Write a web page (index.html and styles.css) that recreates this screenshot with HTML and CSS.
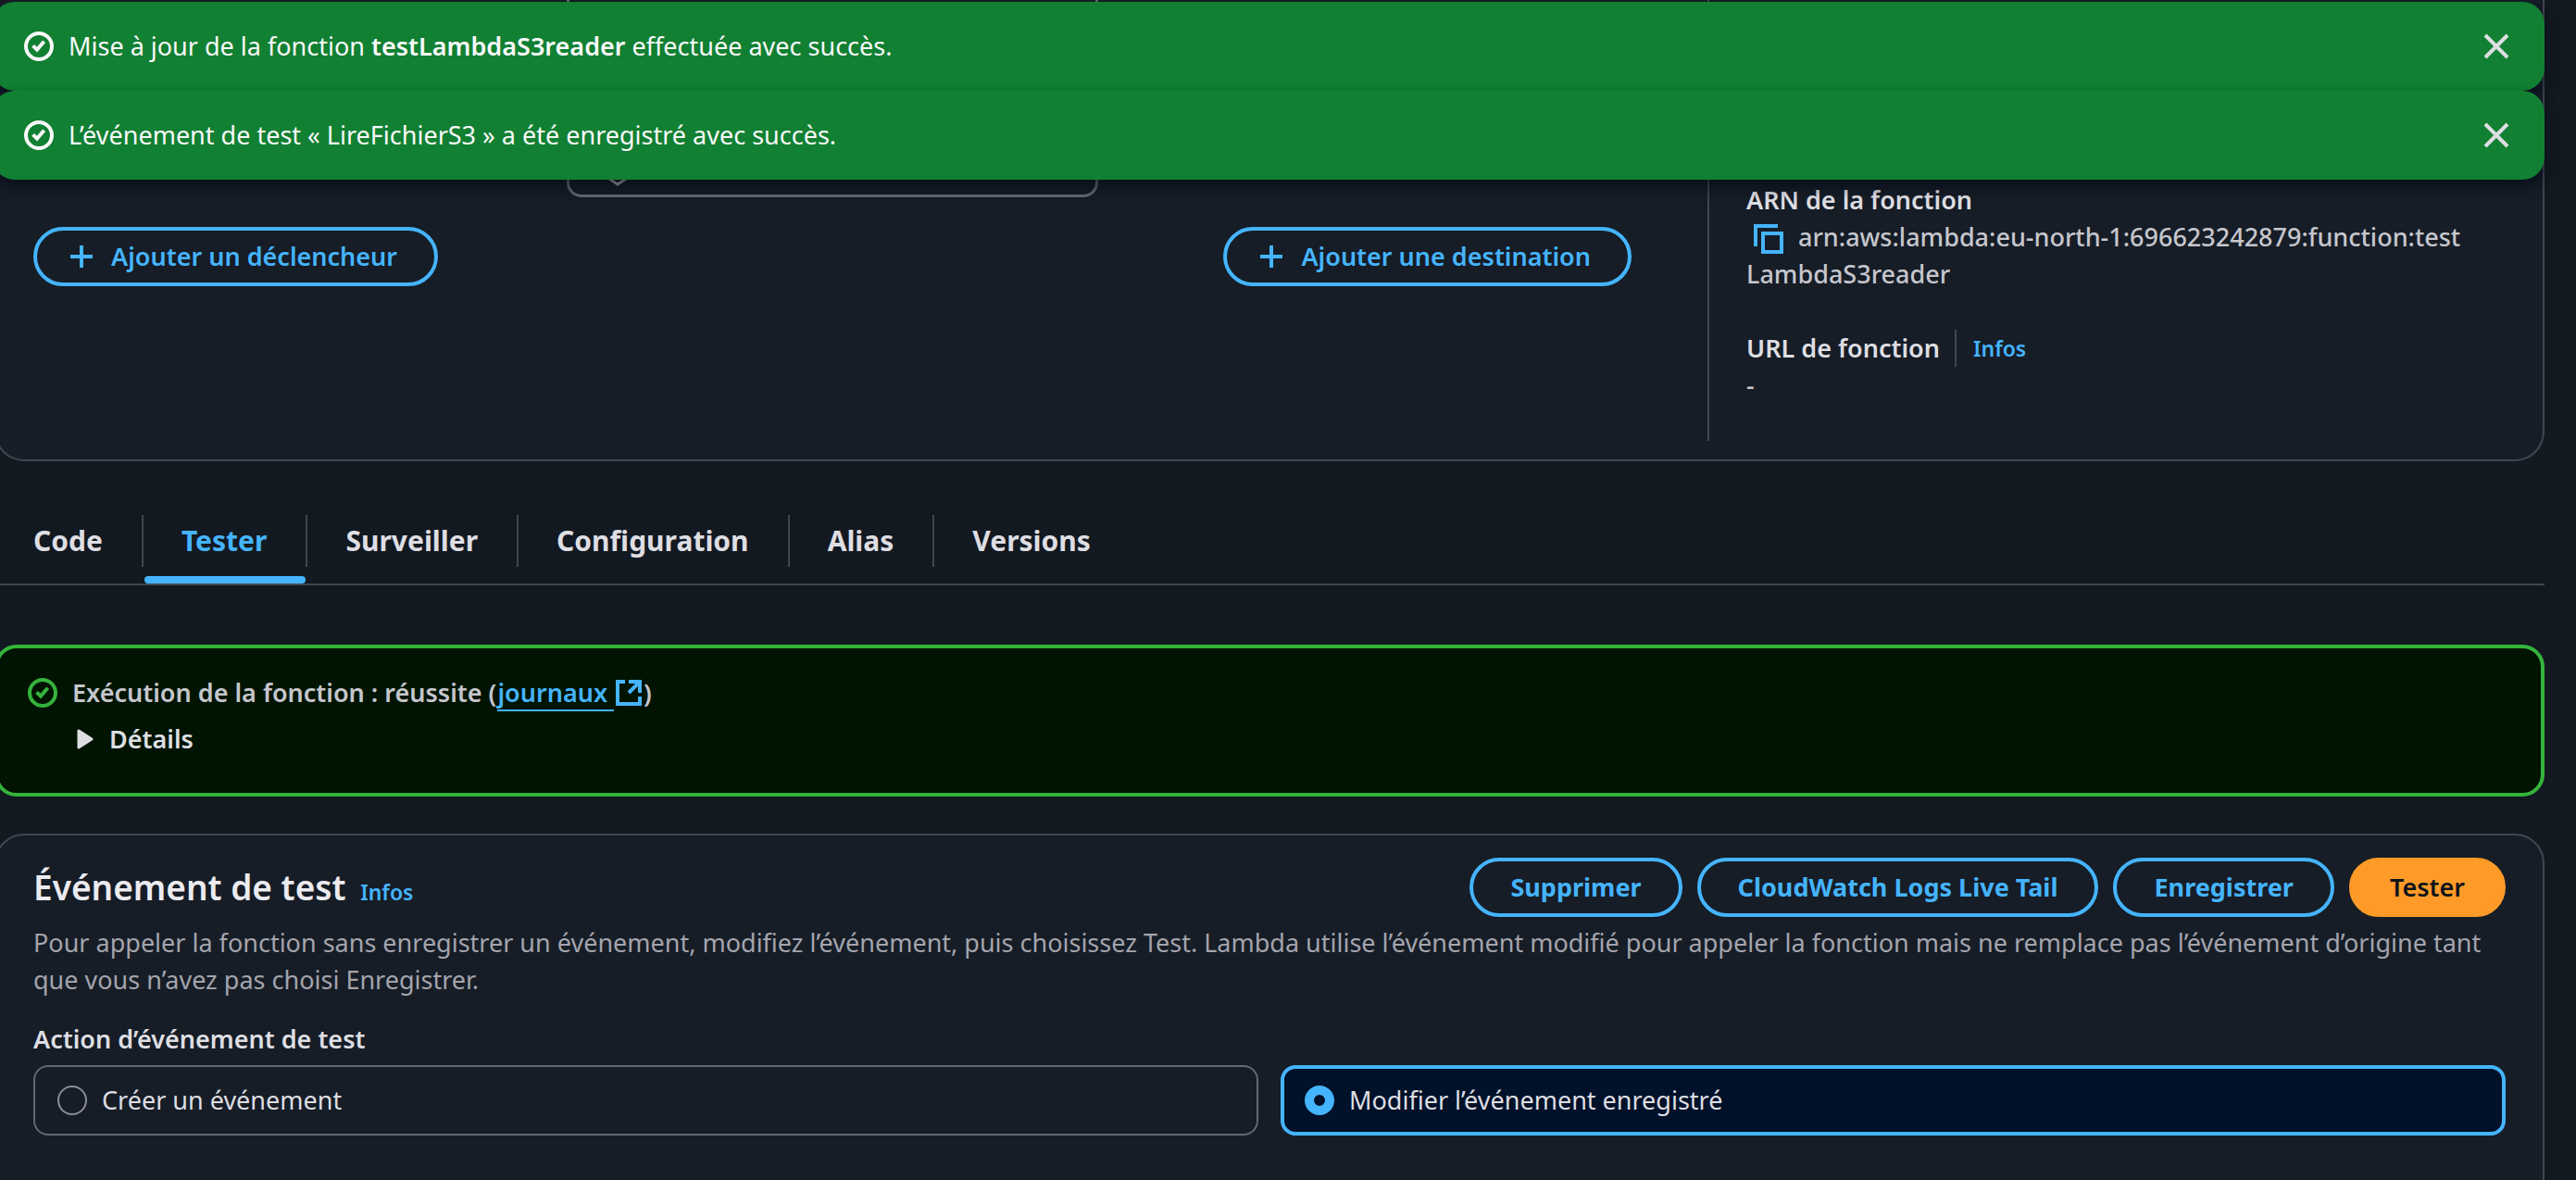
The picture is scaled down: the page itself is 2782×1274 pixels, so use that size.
FILE: index.html
```html
<!DOCTYPE html>
<html lang="fr">
<head>
<meta charset="utf-8">
<title>testLambdaS3reader</title>
<link rel="stylesheet" href="styles.css">
</head>
<body>
<div class="flashbar">
  <div class="flash" role="status">
    <svg class="status-icon" viewBox="0 0 16 16"><circle cx="8" cy="8" r="7"/><path d="m4.800 7.700 2.200 2.100 3.800-4.400"/></svg>
    <p class="flash-text">Mise à jour de la fonction <strong>testLambdaS3reader</strong> effectuée avec succès.</p>
    <button class="close" aria-label="Fermer"><svg viewBox="0 0 16 16"><path d="m2 2 12 12M14 2 2 14"/></svg></button>
  </div>
  <div class="flash" role="status">
    <svg class="status-icon" viewBox="0 0 16 16"><circle cx="8" cy="8" r="7"/><path d="m4.800 7.700 2.200 2.100 3.800-4.400"/></svg>
    <p class="flash-text">L’événement de test « LireFichierS3 » a été enregistré avec succès.</p>
    <button class="close" aria-label="Fermer"><svg viewBox="0 0 16 16"><path d="m2 2 12 12M14 2 2 14"/></svg></button>
  </div>
</div>
<main class="content">
  <section class="panel overview">
    <div class="designer">
      <button class="btn with-icon"><svg class="plus" viewBox="0 0 24 24"><path d="M12 0v24M0 12h24"/></svg>Ajouter un déclencheur</button>
      <div class="layers"><svg viewBox="0 0 40 20"><path d="m0 0 20 13L40 0"/></svg></div>
      <button class="btn with-icon"><svg class="plus" viewBox="0 0 24 24"><path d="M12 0v24M0 12h24"/></svg>Ajouter une destination</button>
    </div>
    <dl class="facts">
      <dt>ARN de la fonction</dt>
      <dd><button class="copy" aria-label="Copier l’ARN"><svg viewBox="0 0 16 16"><path d="M1 12V1h12M5 5h10v10H5z"/></svg></button>arn:aws:lambda:eu-north-1:696623242879:function:test<wbr>LambdaS3reader</dd>
      <dt class="with-info">URL de fonction <a class="info divided" href="#url">Infos</a></dt>
      <dd>-</dd>
    </dl>
  </section>
  <nav class="tabs">
    <a href="#code">Code</a>
    <a href="#tester" class="active" aria-current="page">Tester</a>
    <a href="#surveiller">Surveiller</a>
    <a href="#configuration">Configuration</a>
    <a href="#alias">Alias</a>
    <a href="#versions">Versions</a>
  </nav>
  <section class="result">
    <svg class="status-icon" viewBox="0 0 16 16"><circle cx="8" cy="8" r="7"/><path d="m4.800 7.700 2.200 2.100 3.800-4.400"/></svg>
    <div>
      <h3>Exécution de la fonction : réussite (<a class="logs" href="#journaux"><span>journaux </span><svg viewBox="0 0 14 14"><path d="M5 1H1v12h12V9M7 1h6v6M13 1 7 7"/></svg></a>)</h3>
      <details><summary><svg viewBox="0 0 18 22"><path d="M2 2v18l14-9z"/></svg>Détails</summary></details>
    </div>
  </section>
  <section class="panel event">
    <header class="event-head">
      <h2>Événement de test <a class="info" href="#infos">Infos</a></h2>
      <div class="actions">
        <button class="btn">Supprimer</button>
        <button class="btn">CloudWatch Logs Live Tail</button>
        <button class="btn">Enregistrer</button>
        <button class="btn primary">Tester</button>
      </div>
    </header>
    <p class="description">Pour appeler la fonction sans enregistrer un événement, modifiez l’événement, puis choisissez Test. Lambda utilise l’événement modifié pour appeler la fonction mais ne remplace pas l’événement d’origine tant que vous n’avez pas choisi Enregistrer.</p>
    <fieldset>
      <legend>Action d’événement de test</legend>
      <div class="tiles">
        <label class="tile"><input type="radio" name="action">Créer un événement</label>
        <label class="tile"><input type="radio" name="action" checked>Modifier l’événement enregistré</label>
      </div>
    </fieldset>
  </section>
</main>
</body>
</html>
```

FILE: styles.css
```css
* { box-sizing: border-box; }
html { height: 100%; overflow: hidden; }
body {
  margin: 0;
  height: 100%;
  overflow: hidden;
  background: #131920;
  color: #dedee3;
  font: 27px/40px "Noto Sans", "Open Sans", sans-serif;
}
h2, h3, p, dl, dd, fieldset { margin: 0; padding: 0; border: 0; }
h2, h3, strong, dt, legend, summary { font-weight: 600; }
button { font: inherit; cursor: pointer; }
a { color: #45b4ff; text-decoration: none; }
svg { fill: none; stroke: currentColor; stroke-width: 2; display: block; }

.flashbar {
  position: absolute;
  z-index: 1;
  top: 2px;
  left: -8px;
  right: 34px;
}
.flash {
  display: flex;
  align-items: center;
  height: 96px;
  padding: 0 36px 0 34px;
  border-radius: 24px;
  background: #118032;
  color: #f9f9fa;
  box-shadow: 0 8px 16px rgba(0, 7, 22, 0.6);
}
.status-icon { width: 32px; height: 32px; flex: none; }
.flash-text { flex: 1; margin-left: 16px; }
.close { padding: 0; border: 0; background: none; color: #dedee3; }
.close svg { width: 32px; height: 32px; }

.content { margin: 0 34px 0 -6px; }
.panel {
  background: #161d26;
  border: 2px solid #424650;
  border-radius: 32px;
}
.overview {
  display: flex;
  height: 498px;
  padding: 0 40px 20px;
  border-top: 0;
  border-radius: 0 0 32px 32px;
}
.designer {
  flex: 1;
  display: grid;
  grid-template-columns: 1fr 574px 1fr;
  align-items: start;
  padding-right: 82px;
}
.designer .btn { margin-top: 245px; justify-self: start; }
.designer .btn:last-child { justify-self: end; }
.layers {
  height: 213px;
  border: 3px solid #656871;
  border-top: 0;
  border-radius: 0 0 16px 16px;
  padding: 186px 0 0 32px;
}
.layers svg { width: 40px; height: 20px; color: #a4a4ad; stroke-width: 3; }
.btn {
  display: inline-flex;
  align-items: center;
  height: 64px;
  padding: 0 40px;
  border: 4px solid #45b4ff;
  border-radius: 32px;
  background: transparent;
  color: #45b4ff;
  font-weight: 700;
  white-space: nowrap;
}
.with-icon { gap: 20px; padding-left: 36px; font-weight: 600; }
.plus { width: 24px; height: 24px; stroke-width: 4; }
.primary { background: #fe9a28; border-color: #fe9a28; color: #0f141a; font-weight: 600; }
.facts { width: 862px; padding: 196px 0 0 40px; border-left: 2px solid #424650; }
.facts dd { color: #c6c6cd; margin-bottom: 40px; font-weight: 500; }
.copy { display: inline-block; height: 32px; padding: 0; margin: 0 16px 0 8px; border: 0; background: none; color: #45b4ff; vertical-align: -8px; }
.copy svg { width: 32px; height: 32px; }
.info { font-size: 23px; font-weight: 600; }
.with-info { display: flex; }
.divided { margin-left: 16px; padding-left: 18px; border-left: 2px solid #424650; }

.tabs {
  display: flex;
  margin-top: 44px;
  height: 90px;
  padding-left: 18px;
  border-bottom: 2px solid #424650;
  font-size: 30px;
  font-weight: 700;
}
.tabs a { position: relative; padding: 22px 42px 0 43px; color: #dedee3; }
.tabs a:first-child { padding-left: 24px; }
.tabs a + a::before { content: ""; position: absolute; left: 0; top: 14px; height: 56px; border-left: 2px solid #424650; }
.tabs .active { color: #45b4ff; }
.tabs .active::after { content: ""; position: absolute; left: 3px; right: 0; bottom: 0; height: 8px; border-radius: 4px; background: #45b4ff; }

.result {
  display: flex;
  gap: 16px;
  height: 164px;
  margin-top: 64px;
  padding: 28px 32px;
  border: 4px solid #35b43c;
  border-radius: 24px;
  background: #001401;
}
.result .status-icon { color: #35b43c; margin-top: 4px; }
.result h3 { font-size: 27px; color: #c6c6cd; }
.logs svg { display: inline-block; width: 28px; height: 28px; margin-right: 2px; vertical-align: -4px; }
.logs span { border-bottom: 2px solid #45b4ff; margin-right: 2px; white-space: pre; }
summary { display: flex; align-items: center; gap: 17px; margin-top: 10px; padding-left: 5px; list-style: none; }
summary svg { width: 18px; height: 22px; fill: currentColor; stroke-width: 3; stroke-linejoin: round; }

.event { height: 420px; margin-top: 40px; padding: 24px 40px; }
.event-head { display: flex; justify-content: space-between; align-items: center; }
.event h2 { margin-top: 4px; font-size: 37px; color: #ebebf0; }
.event .info { margin-left: 6px; }
.actions { display: flex; gap: 16px; }
.description { margin-top: 8px; color: #a4a4ad; }
fieldset { margin-top: 24px; }
legend { padding: 0; }
.tiles { display: grid; grid-template-columns: 1fr 1fr; gap: 24px; margin-top: 8px; }
.tile { display: flex; align-items: center; height: 76px; padding: 0 24px; border: 2px solid #656871; border-radius: 16px; gap: 16px; }
.tile input { appearance: none; width: 32px; height: 32px; margin: 0; border: 2px solid #8c8c94; border-radius: 50%; }
.tile:has(:checked) { border: 4px solid #45b4ff; padding: 0 22px; background: #001129; }
.tile input:checked { border: 10px solid #45b4ff; }
```
